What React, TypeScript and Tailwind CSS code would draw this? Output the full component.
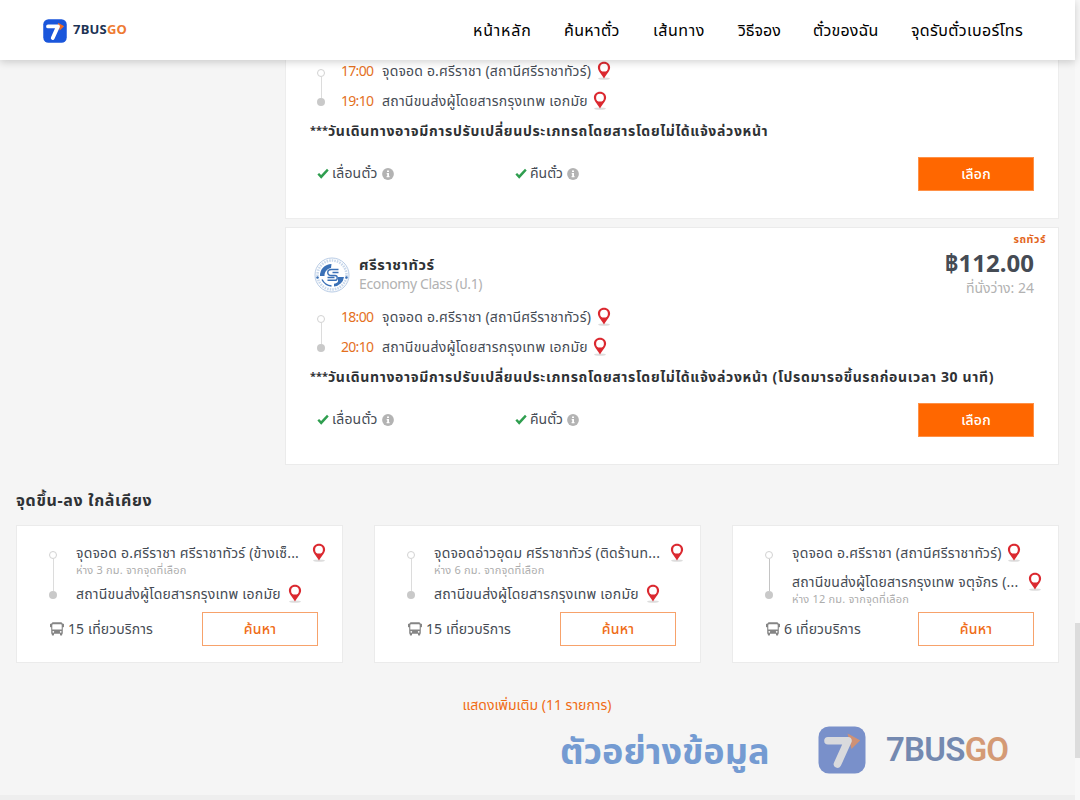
import React from "react";

function Pin() {
  return (
    <svg width="16" height="20" viewBox="0 0 16 20" className="shrink-0">
      <ellipse cx="8" cy="17.6" rx="6" ry="1.2" fill="#ddd" />
      <path
        fillRule="evenodd"
        fill="#db2930"
        d="M8 .8C4.500.8 1.900 3.300 1.900 6.600c0 3.600 3.300 6.200 6.100 11 2.800-4.800 6.100-7.400 6.100-11C14.100 3.300 11.500.8 8 .8Zm0 2a3.900 3.900 0 1 1 0 7.800 3.900 3.900 0 0 1 0-7.800Z"
      />
    </svg>
  );
}

function Check() {
  return (
    <svg width="12" height="12" viewBox="0 0 12 12" className="shrink-0">
      <path d="M.4 6.600 2.100 5l2 2L10 .8l1.700 1.600-7.500 8.400Z" fill="#2f9e4f" />
    </svg>
  );
}

function Info() {
  return (
    <svg width="12" height="12" viewBox="0 0 12 12" className="shrink-0">
      <circle cx="6" cy="6" r="5.900" fill="#b3b3b3" />
      <path d="M5 2.400h2v1.600H5ZM4.700 5H7v3h.5v1.200H4.600V8h.6V6.200h-.5Z" fill="#fff" />
    </svg>
  );
}

function Bus() {
  return (
    <svg width="14" height="14" viewBox="0 0 14 14" className="shrink-0">
      <path
        fillRule="evenodd"
        fill="#858585"
        d="M3.500.3h7c1.200 0 2 .6 2.200 1.500h.8c.3 0 .5.200.5.500v2.400c0 .3-.2.500-.5.500h-.7v6.600h-.6v1.300c0 .3-.2.500-.5.500h-1.200c-.3 0-.5-.2-.5-.5v-1.300H4v1.300c0 .3-.2.500-.5.500H2.300c-.3 0-.5-.2-.5-.5v-1.300h-.6V5.200H.5c-.3 0-.5-.2-.5-.5V2.300c0-.3.200-.5.500-.5h.8C1.500.9 2.300.3 3.500.3ZM3 2.200c-.4 0-.7.300-.7.700v4.500h9.400V2.900c0-.4-.3-.7-.7-.7Zm.3 6.700a.9.900 0 1 0 0 1.800.9.900 0 0 0 0-1.800Zm7.400 0a.9.900 0 1 0 0 1.800.9.900 0 0 0 0-1.800Z"
      />
    </svg>
  );
}

function BrandMark({ size, muted }: { size: number; muted?: boolean }) {
  return (
    <svg width={size} height={size} viewBox="0 0 48 48" className="shrink-0">
      <rect x=".5" y=".5" width="47" height="47" rx="10.500" fill={muted ? "#7990ca" : "#1a56db"} />
      <path d="M29.500 7.500 42 14.500l-8.500 8.500Z" fill={muted ? "#cf9175" : "#f06a23"} />
      <path d="M10 14.800H30L19.500 38" fill="none" stroke={muted ? "#d9dadd" : "#fff"} strokeWidth="7.600" strokeLinecap="round" strokeLinejoin="round" />
      <path d="M29.500 7.500 35 11.500 35 20l7-5.500Z" fill={muted ? "#cf9175" : "#f06a23"} />
    </svg>
  );
}

function OperatorLogo() {
  return (
    <svg width="36" height="36" viewBox="0 0 36 36" className="shrink-0">
      <circle cx="18" cy="18" r="17" fill="#fff" stroke="#b7cbe5" strokeWidth="1" />
      <circle cx="18" cy="18" r="14.500" fill="none" stroke="#c9d8eb" strokeWidth="2.600" strokeDasharray="1.600 1" />
      <path d="M17.500 7A11.500 11.500 0 0 0 6 19h4.500c0-4 2-7 6.500-8ZM20 29.500A11 11 0 0 0 30 20h-6v4.500c-1 1.500-2 2-4 2.300Z" fill="#3a70b6" />
      <path d="M24.500 12.500h-7c-5 0-5 6 0 6h3.500c3 0 3 4.800 0 4.800h-7.500M24.500 15.500h-6M13.500 20.500h7M8 22.500c2 4 5 6 9.500 6.500" fill="none" stroke="#3a70b6" strokeWidth="1.400" />
      <circle cx="3.500" cy="20.500" r="1.200" fill="#3a70b6" />
      <circle cx="32.500" cy="20.500" r="1.200" fill="#3a70b6" />
    </svg>
  );
}

function Track({ line, dark }: { line: string; dark?: boolean }) {
  return (
    <div className="flex w-2 shrink-0 flex-col items-center">
      <i className="size-2 shrink-0 rounded-full border border-[#d2d2d2] bg-white" />
      <i className={`w-px ${line} ${dark ? "bg-[#c4c4c4]" : "bg-[#dcdcdc]"}`} />
      <i className="size-2 shrink-0 rounded-full bg-[#c9c9c9]" />
    </div>
  );
}

function Stops({ from, to }: { from: string; to: string }) {
  return (
    <div className="flex">
      <div className="ml-[31px] pt-[13px]">
        <Track line="h-[21px]" />
      </div>
      <div className="ml-[15px] text-[14px] text-[#454b54]">
        <div className="flex h-[30px] items-center whitespace-nowrap">
          <span className="w-[41px] pb-[2px] pl-px tracking-[-0.7px] text-[#e4701e]">{from}</span>
          <span className="w-[215px] pb-[2px] pl-px tracking-[0.18px]">จุดจอด อ.ศรีราชา (สถานีศรีราชาทัวร์)</span>
          <Pin />
        </div>
        <div className="flex h-[30px] items-center whitespace-nowrap">
          <span className="w-[41px] pb-[2px] pl-px tracking-[-0.7px] text-[#e4701e]">{to}</span>
          <span className="w-[211px] pb-[2px] pl-px tracking-[0.24px]">สถานีขนส่งผู้โดยสารกรุงเทพ เอกมัย</span>
          <Pin />
        </div>
      </div>
    </div>
  );
}

function TripFooter({ note }: { note: string }) {
  return (
    <>
      <div className="flex h-[30px] items-center pb-[2px] pl-[24px] text-[14px] font-bold tracking-[0.65px] whitespace-nowrap text-[#2f3235]">
        <span className="w-[18px] text-[11px] tracking-[0px]">***</span>
        <span>{note}</span>
      </div>
      <div className="mt-[11px] flex h-[34px] items-center pr-[24px] pl-[31px] text-[14px] text-[#454b54]">
        <div className="flex w-[198px] items-center whitespace-nowrap">
          <Check />
          <span className="ml-[3px] w-[50px] pb-[3px] tracking-[0.2px]">เลื่อนตั๋ว</span>
          <Info />
        </div>
        <div className="flex items-center whitespace-nowrap">
          <Check />
          <span className="ml-[3px] w-[37px] pb-[3px]">คืนตั๋ว</span>
          <Info />
        </div>
        <button className="ml-auto h-[34px] w-[116px] border border-[#ff9147] bg-[#ff6700] pb-[2px] text-[14px] font-medium tracking-[0.2px] text-white">เลือก</button>
      </div>
    </>
  );
}

type Nearby = { from: string; to: string; distance: string; trips: string; far?: boolean; fromW: string; toW: string };

const nearby: Nearby[] = [
  { from: "จุดจอด อ.ศรีราชา ศรีราชาทัวร์ (ข้างเซ็...", to: "สถานีขนส่งผู้โดยสารกรุงเทพ เอกมัย", distance: "ห่าง 3 กม. จากจุดที่เลือก", trips: "15 เที่ยวบริการ", fromW: "w-[235px]", toW: "w-[211px]" },
  { from: "จุดจอดอ่าวอุดม ศรีราชาทัวร์ (ติดร้านท...", to: "สถานีขนส่งผู้โดยสารกรุงเทพ เอกมัย", distance: "ห่าง 6 กม. จากจุดที่เลือก", trips: "15 เที่ยวบริการ", fromW: "w-[235px]", toW: "w-[211px]" },
  { from: "จุดจอด อ.ศรีราชา (สถานีศรีราชาทัวร์)", to: "สถานีขนส่งผู้โดยสารกรุงเทพ จตุจักร (...", distance: "ห่าง 12 กม. จากจุดที่เลือก", trips: "6 เที่ยวบริการ", far: true, fromW: "w-[214px]", toW: "w-[235px]" },
];

function NearbyCard({ item }: { item: Nearby }) {
  const distance = <div className="h-[11px] text-[11px] leading-[11px] tracking-[0.2px] text-[#adadad]"><span>{item.distance}</span></div>;
  return (
    <div className="h-[138px] w-[327px] border border-[#ebebeb] bg-white text-[14px] tracking-[0.2px] whitespace-nowrap text-[#454b54]">
      <div className="flex h-[86px]">
        <div className="ml-[32px] pt-[25px]">
          <Track line="h-[32px]" dark={item.far} />
        </div>
        <div className="ml-[19px] pt-[16px]">
          <div className="flex h-[22px] items-center">
            <span className={`${item.fromW} pb-[2px]`}>{item.from}</span>
            <Pin />
          </div>
          {item.far ? <div className="h-[7px]" /> : distance}
          <div className={item.far ? "flex h-[22px] items-center" : "mt-[8px] flex h-[22px] items-center"}>
            <span className={`${item.toW} pb-[2px]`}>{item.to}</span>
            <Pin />
          </div>
          {item.far && distance}
        </div>
      </div>
      <div className="flex h-[34px] items-center pr-[24px] pl-[33px]">
        <Bus />
        <span className="ml-[4px] pb-[2px] tracking-[0.1px]">{item.trips}</span>
        <button className="ml-auto h-[34px] w-[116px] border border-[#f7a26b] bg-white pb-[2px] font-medium text-[#ef6c16]">ค้นหา</button>
      </div>
    </div>
  );
}

export default function App() {
  return (
    <div className="relative h-[800px] w-[1080px] overflow-hidden bg-[#f5f5f5] font-['Noto_Sans','Noto_Sans_Thai',sans-serif]">
      <header className="relative z-10 flex h-[60px] w-[1075px] items-center bg-white pr-[52px] pl-[43px] shadow-[0_2px_8px_rgba(0,0,0,0.18)]">
        <div className="flex items-center pt-px">
          <BrandMark size={24} />
          <span className="ml-[6px] pb-px text-[13px] font-bold tracking-[0.2px] text-[#1d3354]">
            7BUS<span className="text-[#ee7a32]">GO</span>
          </span>
        </div>
        <nav className="ml-auto flex text-[16px] tracking-[0.35px] whitespace-nowrap text-black">
          <span className="w-[91px] tracking-[0.8px]">หน้าหลัก</span>
          <span className="w-[89px]">ค้นหาตั๋ว</span>
          <span className="w-[85px] tracking-[0.6px]">เส้นทาง</span>
          <span className="w-[75px] tracking-[0px]">วิธีจอง</span>
          <span className="w-[98px] tracking-[0.2px]">ตั๋วของฉัน</span>
          <span className="w-[112px]">จุดรับตั๋วเบอร์โทร</span>
        </nav>
      </header>

      <main>
        <section className="ml-[285px] w-[774px]">
          <article className="-mt-[4px] h-[163px] border border-[#ededed] bg-white">
            <div className="-mt-px">
              <Stops from="17:00" to="19:10" />
              <TripFooter note="วันเดินทางอาจมีการปรับเปลี่ยนประเภทรถโดยสารโดยไม่ได้แจ้งล่วงหน้า" />
            </div>
          </article>
          <article className="mt-[8px] h-[238px] border border-[#ebebeb] bg-white">
            <div className="flex h-[74px] pr-[24px] pl-[28px] whitespace-nowrap">
              <div className="pt-[29px]">
                <OperatorLogo />
              </div>
              <div className="ml-[9px] pt-[26px]">
                <div className="h-[20px] text-[14.5px] leading-[21px] font-bold tracking-[0.6px] text-[#2f3235]"><span>ศรีราชาทัวร์</span></div>
                <div className="h-[20px] text-[14px] leading-[20px] tracking-[-0.36px] text-[#b2b2b2]"><span>Economy Class (ป.1)</span></div>
              </div>
              <div className="ml-auto flex flex-col items-end">
                <div className="-mr-[12px] mt-[4px] h-[11px] text-[10.5px] leading-[14px] font-bold tracking-[0.6px] text-[#e3651c]"><span>รถทัวร์</span></div>
                <div className="h-[42px] text-[24px] leading-[40px] font-bold text-[#454b54]"><span>฿112.00</span></div>
                <div className="-mt-[7px] h-[20px] text-[14px] leading-[20px] text-[#b2b2b2]"><span>ที่นั่งว่าง: 24</span></div>
              </div>
            </div>
            <Stops from="18:00" to="20:10" />
            <TripFooter note="วันเดินทางอาจมีการปรับเปลี่ยนประเภทรถโดยสารโดยไม่ได้แจ้งล่วงหน้า (โปรดมารอขึ้นรถก่อนเวลา 30 นาที)" />
          </article>
        </section>

        <h2 className="mt-[23px] ml-[16px] h-[25px] text-[16px] leading-[24px] font-bold tracking-[0.65px] text-[#2f3235]"><span>จุดขึ้น-ลง ใกล้เคียง</span></h2>
        <div className="mt-[12px] ml-[16px] flex gap-[31px]">
          {nearby.map((item) => (
            <NearbyCard key={item.from} item={item} />
          ))}
        </div>
        <div className="mt-[32px] w-[1074px] text-center text-[14px] leading-[20px] text-[#f06c14]"><span>แสดงเพิ่มเติม (11 รายการ)</span></div>
      </main>

      <div className="absolute top-[720px] left-[560px] flex h-[60px] items-center whitespace-nowrap">
        <span className="w-[258px] pt-[2px] text-[36px] font-bold text-[#749bd2]">ตัวอย่างข้อมูล</span>
        <BrandMark size={48} muted />
        <span className="ml-[20px] font-[Roboto] text-[33px] font-semibold tracking-[-0.75px] text-[#7489b0]">
          7BUS<span className="text-[#d49a75]">GO</span>
        </span>
      </div>

      <div className="absolute bottom-0 left-0 h-[5px] w-[1075px] bg-[#eeeeee]" />
      <div className="absolute top-0 right-0 h-full w-[5px] bg-[#f8f8f8]">
        <div className="mt-[623px] h-[135px] bg-[#dcdcdc]" />
      </div>
    </div>
  );
}
